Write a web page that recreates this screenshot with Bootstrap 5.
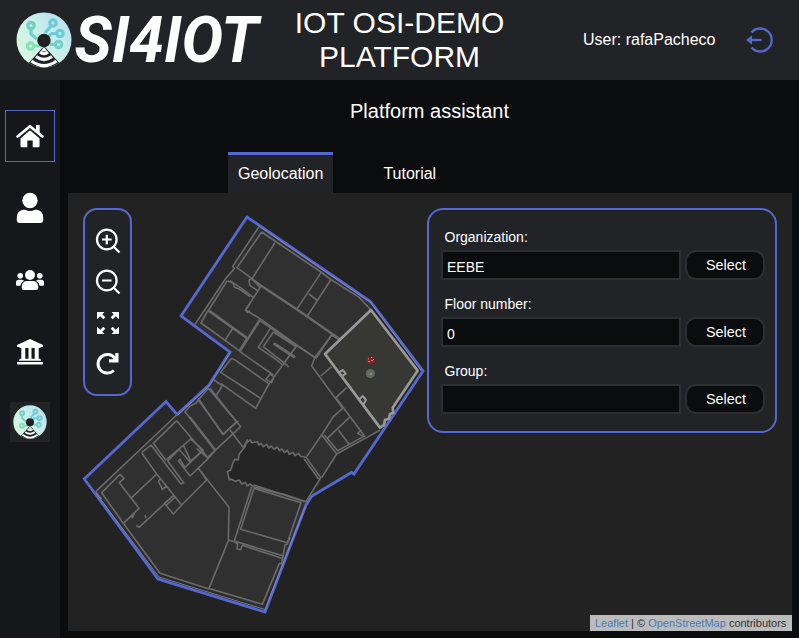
<!DOCTYPE html>
<html lang="en">
<head>
<meta charset="utf-8">
<meta name="viewport" content="width=device-width, initial-scale=1">
<title>SI4IOT platform</title>
<link href="https://cdn.jsdelivr.net/npm/bootstrap@5.3.0/dist/css/bootstrap.min.css" rel="stylesheet">
<style>
body{background:#0b0c0e;color:#fff;font:16px/1.2 "Liberation Sans",Arial,sans-serif;height:638px;overflow:hidden}
svg{display:block}
.topbar{height:80px;background:#222327;flex:none}
.brand-box{width:262px;height:80px}
.site-title{font-size:30px;line-height:34px;font-weight:400;width:262px;padding-left:13px}
.user-area{padding-left:59px;gap:30px}
.side{width:60px;background:#16171b;padding-top:30px}
.side-link{width:50px;height:52px;margin-bottom:20px;border:1px solid transparent}
.side-link.on{border-color:#5568d0}
.side-logo{width:40px;height:40px;background:#222327;margin-top:4px}
.page-title{font-size:20px;line-height:24px;font-weight:400;padding-top:19px;height:72px}
.tab-row{height:41px;padding-left:168px;gap:40px}
.tab-link{height:41px;padding:7px 10px 0;border-top:3px solid transparent;color:#fff;text-decoration:none;line-height:24px}
.tab-link.on{background:#222327;border-color:#5568d0}
.map-panel{height:438px;margin:0 7px 0 8px;background:#222;padding:15px}
.tools{width:49px;height:188px;border:2px solid #5568d0;border-radius:14px;background:#222327;padding-top:16px;gap:13px}
.finder{width:350px;height:225px;border:2px solid #5568d0;border-radius:16px;background:#222327;padding:18px 10px 0 12px}
.finder label{font-size:14px;line-height:18px;height:22px;padding-left:3.500px}
.field-row{gap:4px;margin-bottom:15px}
.box-input{width:240px;height:30px;border:2px solid #2d2e31;background:#0b0c0e;color:#fff;font-size:14px;padding:4px 4px 0;border-radius:0;outline:0}
.pick{width:80px;height:30px;border:2px solid #2d2e31;border-radius:11px;background:#0b0c0e;color:#fff;font-size:14.4px;line-height:1;padding:0 0 0 2px}
.credit{right:0;bottom:0;width:202px;height:16px;background:#bcbcbc;color:#333;font-size:11px;line-height:16px;padding-left:5px;white-space:nowrap}
.credit .credit-link{color:#4a7ab5;text-decoration:none}
.wall{fill:none;stroke:#6a6a6a;stroke-width:4.800;stroke-linejoin:round}
</style>
</head>
<body class="d-flex flex-column">
<svg width="0" height="0" class="position-absolute" aria-hidden="true">
<defs>
<linearGradient id="disc" x1="0" y1="1" x2="1" y2="0"><stop offset="0" stop-color="#dcfae0"/><stop offset=".5" stop-color="#cbf0ea"/><stop offset="1" stop-color="#b5ddf0"/></linearGradient>
<clipPath id="round"><circle cx="28" cy="28" r="27.500"/></clipPath>
<symbol id="emblem" viewBox="0 0 56 56">
<circle cx="28" cy="28" r="27.500" fill="url(#disc)"/>
<g fill="none" stroke-width="3.200">
<g stroke="#72cfc3"><circle cx="15" cy="13.500" r="3.200"/><path d="M15 17v5l6 5"/></g>
<g stroke="#70cbd8"><circle cx="37" cy="11" r="3.200"/><path d="M35 14l-6 7"/><circle cx="44" cy="21.500" r="3.200"/><path d="M41 21.500h-5l-4 3"/></g>
<g stroke="#75cfcd"><circle cx="42.500" cy="32.500" r="3.200"/><path d="M39 32.500h-5"/></g>
<g stroke="#87e2b4"><circle cx="14.500" cy="34" r="3.200"/><path d="M18 34h7"/></g>
</g>
<g clip-path="url(#round)"><path d="M28 34L9 55h38z" fill="#222327"/><g fill="none" stroke="#fff" stroke-width="3.200"><path d="M24 40q4 3 8 0M20 44.500q8 6 16 0M15.500 49q12.500 9.500 25 0"/></g><path d="M25 39l3-4 3 4z" fill="#fff"/></g>
<circle cx="28" cy="28.500" r="6.700" fill="#202124"/>
</symbol>
</defs>
</svg>

<header class="topbar d-flex align-items-center">
  <div class="brand-box">
    <svg width="270" height="80"><use href="#emblem" x="16" y="12" width="56" height="56"/>
    <text x="74.500" y="62" font-family="Roboto, sans-serif" font-style="italic" font-weight="700" font-size="64" fill="#fff" textLength="184" lengthAdjust="spacingAndGlyphs">SI4IOT</text></svg>
  </div>
  <h1 class="site-title text-center mb-0">IOT OSI-DEMO PLATFORM</h1>
  <div class="user-area d-flex align-items-center">
    <span>User: rafaPacheco</span>
    <svg width="27" height="26" viewBox="0 0 27 26" fill="none" stroke="#5568d0" stroke-width="2.300"><path d="M5.500 5.500A11.500 11.500 0 1 1 5.500 20.500"/><path d="M4 13h11.500"/><path d="M0 13l6-4.800v9.600z" fill="#5568d0" stroke="none"/></svg>
  </div>
</header>

<div class="d-flex flex-grow-1">
  <nav class="side d-flex flex-column align-items-center flex-shrink-0">
    <a class="side-link on d-flex align-items-center justify-content-center"><svg width="28" height="24" viewBox="0 0 28 24" fill="#fff"><path d="M4.500 14.200L14 6l9.500 8.200V22a1.200 1.200 0 0 1-1.200 1.200h-5.600v-6.700h-5.400v6.700H5.700A1.200 1.200 0 0 1 4.500 22z"/><path d="M1.600 12.500L14 2.200l12.400 10.300" fill="none" stroke="#222327" stroke-width="4.600" transform="translate(0 1)"/><path d="M1.600 12.500L14 2.200l12.400 10.300" fill="none" stroke="#fff" stroke-width="2.700" stroke-linecap="round" stroke-linejoin="round"/><path d="M20 1h3.700v9L20 7z"/></svg></a>
    <a class="side-link d-flex align-items-center justify-content-center"><svg width="28" height="32" viewBox="0 0 28 32" fill="#fff"><circle cx="14" cy="8.500" r="7.700"/><path d="M7 17.700h2q5 2.600 10 0h2q6.200 1 6.200 8.300V28q0 3-3 3H4q-3.200 0-3.200-3v-2q0-7.300 6.200-8.300z"/></svg></a>
    <a class="side-link d-flex align-items-center justify-content-center"><svg width="28" height="22" viewBox="0 0 28 22" fill="#fff"><circle cx="14" cy="6" r="5"/><circle cx="4.200" cy="6.700" r="2.800"/><circle cx="23.800" cy="6.700" r="2.800"/><path d="M10 12h8q4.300 1 4.300 6.500 0 2.500-2.500 2.500H8.200q-2.500 0-2.500-2.500Q5.700 13 10 12zM2.800 10.700h2.800q1.600 0 2.300 1-3.200 2-3.600 5H1.200Q0 16.700 0 15.500v-2q0-2.800 2.800-2.800zM25.200 10.700h-2.800q-1.600 0-2.300 1 3.200 2 3.600 5h3.100q1.200 0 1.200-1.200v-2q0-2.800-2.800-2.800z"/></svg></a>
    <a class="side-link d-flex align-items-center justify-content-center"><svg width="26" height="26" viewBox="0 0 26 26" fill="#fff"><path d="M13 0L0 6v2h2l1 1h20l1-1h2V6zM4.300 9h4v11h-4zM11.500 9h3v11h-3zM17.700 9h4v11h-4zM2.800 19.800h20.400l1 2H1.800zM0 23h26v2.600H0z"/></svg></a>
    <a class="side-logo d-flex align-items-center justify-content-center"><svg width="34" height="34"><use href="#emblem" width="34" height="34"/></svg></a>
  </nav>

  <main class="flex-grow-1">
    <h2 class="page-title text-center mb-0">Platform assistant</h2>
    <div class="tab-row d-flex">
      <a class="tab-link on">Geolocation</a>
      <a class="tab-link">Tutorial</a>
    </div>
    <section class="map-panel position-relative">
      <svg class="position-absolute top-0 start-0" width="724" height="438" viewBox="68 193 724 438">
        <path d="M181 316L247 217L370.500 301.500L423 371L354 474L351.500 472.500L312 496L306 505L265 612L158 579L84.300 479L166 401.500L177 414.500L209 385L230 352z" fill="#282828"/>
        <path d="M259 226L370 302L371 310L419 371L380 428L337 454L310 500L263 608L159 574L96 491L177 415L209 385L230 352L195 325z" fill="#303030"/>
        <path d="M181 316L247 217L370.500 301.500L423 371L354 474L351.500 472.500L312 496L306 505L265 612L158 579L84.300 479L166 401.500L177 414.500L209 385L230 352z" fill="none" stroke="#5568d0" stroke-width="2.800"/>
        <!-- north wing -->
        <g class="wall" transform="translate(235 200) scale(.33333)">
          <path d="M72 80L-7 199L-1 205L-29 237L-120 373M80 96L6 203L50 235M80 96L258 216L287 238L345 275L370 290L408 330M120 128L52 235L42 240L45 257L68 272M50 235L75 262M258 218L185 328M287 240L216 350M222 282L245 300M78 258L32 330L75 356L185 435L243 475M290 405L243 475M75 356L15 452M-15 243L20 265L55 293M-15 378L35 413"/>
          <path d="M52 238L75 255L185 328L315 418" stroke-width="7"/>
        </g>
        <!-- north-west rooms -->
        <g class="wall" transform="translate(70 195) scale(.33333)">
          <path d="M472 257L418 342L412 350L393 384L508 467L530 430L415 348M487 402L465 436M472 257L490 265L493 277L508 282L540 305M540 325L526 345L533 353L540 347"/>
          <path d="M418 347L530 428" stroke-width="6"/>
        </g>
        <!-- central rooms and stairs -->
        <g class="wall" transform="translate(190 320) scale(.33333)">
          <path d="M210 2L150 95L250 165M210 2L318 75L375 112L425 45M243 22L205 82L256 117L278 135M250 36L220 80L290 135L296 142M250 36L318 80L278 135L235 195L197 265L92 190M125 115L92 157L212 235M125 115L138 122L235 190M228 178L240 163L252 170L245 188zM425 45L445 58M375 112L365 138L458 265M425 140L392 168M470 203L438 233M458 265L430 290L395 345L350 410M395 345L440 402L535 350L570 330M403 345L443 392L520 350L503 340L515 330M478 292L412 355M445 330L477 373M405 102L455 170M438 233L525 350M440 402L395 473M60 205L152 320L50 415M25 235L98 343L145 303M72 180L97 197L80 225M0 290L75 388M120 330L160 383M0 355L40 390L0 425M20 385L52 413"/>
          <path d="M254 72L312 110" stroke-width="9" stroke-linecap="round"/>
        </g>
        <!-- west wing -->
        <g class="wall" transform="translate(75 380) scale(.33333)">
          <path d="M62 335L305 105M62 335L80 358M145 430L80 338L135 283L147 295L133 308L192 385L145 430M305 122L235 190L272 240L350 175L305 122M350 175L400 235L345 288L310 242M325 195L348 245L383 212M345 288L310 242L315 238L330 262L383 212M200 218L228 195L318 312L326 308L278 243L312 208L345 245M200 218L245 282L320 375L295 402L268 370L297 345M275 375L302 350M245 282L170 353M297 345L192 442L183 436M210 405L213 415M170 415L178 402M320 375L395 300L370 265L462 382L460 482L402 625M395 300L388 292M400 235L420 212L330 95L345 78L365 68L372 55M370 60L445 163L485 125L400 25zM250 303L262 328L275 318M250 303L258 295M145 430L255 580L402 627"/>
        </g>
        <!-- atrium and south block -->
        <g class="wall" transform="translate(200 430) scale(.33333)">
          <path d="M150 30L156 38L172 35L176 45L183 40L190 50L200 43L206 54L214 48L222 58L232 51L238 62L246 57L253 68L262 61L268 73L278 67L285 77L296 70L302 79L318 82L362 143L318 215L250 192L235 190L160 170L150 162L142 168L136 157L125 162L118 150L106 154L92 147L88 150L82 125L92 120L98 102L104 88L114 90L118 72L135 50L138 40z" fill="#252525"/>
          <path d="M312 86L356 147M155 170L103 333M162 175L122 298L262 338L303 218L162 175M103 333L250 378M85 330L103 335L113 342L111 357L122 359L127 346L245 385M270 322L262 342L255 345L245 400L238 400L187 523L25 475M160 165L315 215M130 52L143 28"/>
        </g>
        <path d="M259 226L370.500 302.500L421.500 371M230 353L209 386L178 415M96 493L159 577L265 609.500L305 507" fill="none" stroke="#8a8fae" stroke-width=".8"/>
        <!-- selected room -->
        <g transform="translate(190 320) scale(.33333)" stroke="#999" stroke-width="8" stroke-linejoin="round"><path d="M543-30L405 102L570 323L582 315L585 300L597 296L600 282L610 278L608 263L683 152z" fill="#373734"/><path d="M446 158L458 150L467 161L455 170M508 238L518 228L528 240L520 254" fill="none" stroke-width="6"/></g>
        <circle cx="370.700" cy="360" r="3.800" fill="#8e1d20"/><path d="M368 359h1m2-1.500h1m1 2h1m-6 2h2m1-1h2" stroke="#d99" stroke-width=".8"/>
        <circle cx="370.400" cy="373.500" r="4.500" fill="#666863"/><path d="M368.500 374.500l3.500-1.500v1.500z" fill="#83bd35"/>
      </svg>
      <div class="d-flex justify-content-between align-items-start position-relative">
        <div class="tools d-flex flex-column align-items-center">
          <svg width="26" height="28" viewBox="0 0 26 28" fill="none" stroke="#fff" stroke-width="2.200"><circle cx="11.800" cy="13.500" r="9.800"/><path d="M18.500 20.500l6 6M7 13.500h9.600M11.800 8.700v9.600"/></svg>
          <svg width="26" height="28" viewBox="0 0 26 28" fill="none" stroke="#fff" stroke-width="2.200"><circle cx="11.800" cy="13.500" r="9.800"/><path d="M18.500 20.500l6 6M7 13.500h9.600"/></svg>
          <svg width="24" height="28" viewBox="0 0 24 28" fill="#fff"><path id="arr" d="M1 4h7.500L6.300 6.200l3 3-2 2-3-3L1 11.300z"/><use href="#arr" transform="matrix(-1 0 0 1 24 0)"/><use href="#arr" transform="matrix(1 0 0 -1 0 30)"/><use href="#arr" transform="matrix(-1 0 0 -1 24 30)"/></svg>
          <svg width="24" height="28" viewBox="0 0 24 28"><path d="M19 9.500A9.300 9.300 0 1 0 17.800 21.500" fill="none" stroke="#fff" stroke-width="3"/><path d="M22.500 4v9.500H13v-3.200h3.500L19.300 7.500V4z" fill="#fff"/></svg>
        </div>
        <form class="finder">
          <label class="d-block" for="org">Organization:</label>
          <div class="field-row d-flex"><input id="org" class="box-input" value="EEBE"><button type="button" class="pick">Select</button></div>
          <label class="d-block" for="floor">Floor number:</label>
          <div class="field-row d-flex"><input id="floor" class="box-input" value="0"><button type="button" class="pick">Select</button></div>
          <label class="d-block" for="grp">Group:</label>
          <div class="field-row d-flex"><input id="grp" class="box-input"><button type="button" class="pick">Select</button></div>
        </form>
      </div>
      <div class="credit position-absolute"><a class="credit-link">Leaflet</a> | © <a class="credit-link">OpenStreetMap</a> contributors</div>
    </section>
  </main>
</div>
<script src="https://cdn.jsdelivr.net/npm/bootstrap@5.3.0/dist/js/bootstrap.bundle.min.js"></script>
</body>
</html>
